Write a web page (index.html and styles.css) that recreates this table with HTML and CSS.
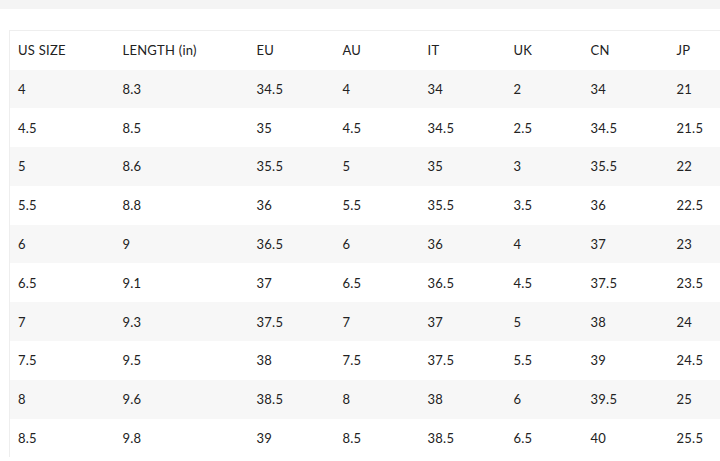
FILE: index.html
```html
<!DOCTYPE html>
<html>
<head>
<meta charset="utf-8">
<link rel="stylesheet" href="styles.css">
</head>
<body>
<div class="topbar"></div>
<div class="wrap">
<table class="sizes">
<thead>
<tr><th class="c1">US SIZE</th><th class="c2">LENGTH (in)</th><th class="c3">EU</th><th class="c4">AU</th><th class="c5">IT</th><th class="c6">UK</th><th class="c7">CN</th><th class="c8">JP</th></tr>
</thead>
<tbody>
<tr><td>4</td><td>8.3</td><td>34.5</td><td>4</td><td>34</td><td>2</td><td>34</td><td>21</td></tr>
<tr><td>4.5</td><td>8.5</td><td>35</td><td>4.5</td><td>34.5</td><td>2.5</td><td>34.5</td><td>21.5</td></tr>
<tr><td>5</td><td>8.6</td><td>35.5</td><td>5</td><td>35</td><td>3</td><td>35.5</td><td>22</td></tr>
<tr><td>5.5</td><td>8.8</td><td>36</td><td>5.5</td><td>35.5</td><td>3.5</td><td>36</td><td>22.5</td></tr>
<tr><td>6</td><td>9</td><td>36.5</td><td>6</td><td>36</td><td>4</td><td>37</td><td>23</td></tr>
<tr><td>6.5</td><td>9.1</td><td>37</td><td>6.5</td><td>36.5</td><td>4.5</td><td>37.5</td><td>23.5</td></tr>
<tr><td>7</td><td>9.3</td><td>37.5</td><td>7</td><td>37</td><td>5</td><td>38</td><td>24</td></tr>
<tr><td>7.5</td><td>9.5</td><td>38</td><td>7.5</td><td>37.5</td><td>5.5</td><td>39</td><td>24.5</td></tr>
<tr><td>8</td><td>9.6</td><td>38.5</td><td>8</td><td>38</td><td>6</td><td>39.5</td><td>25</td></tr>
<tr><td>8.5</td><td>9.8</td><td>39</td><td>8.5</td><td>38.5</td><td>6.5</td><td>40</td><td>25.5</td></tr>
</tbody>
</table>
</div>
</body>
</html>
```
FILE: styles.css
```css
html, body {
  margin: 0;
  padding: 0;
  background: #fff;
  overflow: hidden;
}
body {
  font-family: Lato, "Open Sans", sans-serif;
  color: #222;
  font-size: 13px;
}
.topbar {
  height: 9px;
  background: #f4f4f4;
}
.wrap {
  padding: 21px 0 0 9px;
  overflow: hidden;
}
.sizes {
  border-collapse: collapse;
  table-layout: fixed;
  width: 760px;
  border-top: 1px solid #eeeeee;
  border-left: 1px solid #eeeeee;
}
.sizes th,
.sizes td {
  height: 38.8px;
  padding: 0 0 0 8px;
  text-align: left;
  font-weight: 400;
  white-space: nowrap;
  letter-spacing: 0.25px;
  box-sizing: border-box;
}
.sizes th {
  height: 39px;
}
.sizes tbody tr:nth-child(odd) {
  background: #f7f7f7;
}
.c1 { width: 105px; }
.c2 { width: 134px; }
.c3 { width: 86px; }
.c4 { width: 85px; }
.c5 { width: 86px; }
.c6 { width: 77px; }
.c7 { width: 86px; }
.c8 { width: 101px; }
```
